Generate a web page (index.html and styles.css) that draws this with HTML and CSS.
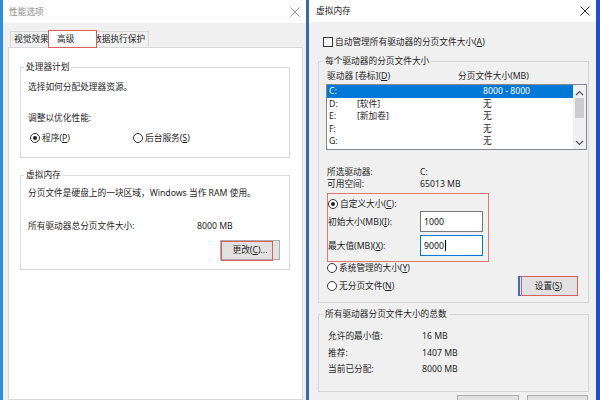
FILE: index.html
```html
<!DOCTYPE html>
<html lang="zh-CN">
<head>
<meta charset="utf-8">
<title>性能选项 / 虚拟内存</title>
<link rel="stylesheet" href="styles.css">
</head>
<body>
<div class="desktop">
  <div class="win win-left">
    <div class="titlebar inactive">
      <span class="title">性能选项</span>
      <svg class="close" width="10" height="10" viewBox="0 0 10 10"><path d="M0.5 0.5 L9.5 9.5 M9.5 0.5 L0.5 9.5" stroke="#9a9a9a" stroke-width="1" fill="none"/></svg>
    </div>
    <div class="lbody">
      <div class="tabs">
        <div class="tab tab1">视觉效果</div>
        <div class="tab tab-active">高级</div>
        <div class="tab tab3">数据执行保护</div>
      </div>
      <div class="panel">
        <fieldset class="group g-cpu">
          <legend>处理器计划</legend>
          <div class="line">选择如何分配处理器资源。</div>
          <div class="line opt-title">调整以优化性能:</div>
          <div class="radio-row">
            <label class="ritem r-prog"><span class="radio on"></span>程序(<u>P</u>)</label>
            <label class="ritem r-bg"><span class="radio"></span>后台服务(<u>S</u>)</label>
          </div>
        </fieldset>
        <fieldset class="group g-vm">
          <legend>虚拟内存</legend>
          <div class="line">分页文件是硬盘上的一块区域，Windows 当作 RAM 使用。</div>
          <div class="line total-row"><span class="total-label">所有驱动器总分页文件大小:</span><span>8000 MB</span></div>
          <div class="btn-row">
            <button class="btn btn-change">更改(<u>C</u>)...<span class="mark mark-change"></span></button>
          </div>
        </fieldset>
      </div>
    </div>
  </div>

  <div class="win win-right">
    <div class="titlebar">
      <span class="title">虚拟内存</span>
      <svg class="close" width="10" height="10" viewBox="0 0 10 10"><path d="M0.5 0.5 L9.5 9.5 M9.5 0.5 L0.5 9.5" stroke="#333" stroke-width="1" fill="none"/></svg>
    </div>
    <div class="rbody">
      <label class="check-row"><span class="checkbox"></span>自动管理所有驱动器的分页文件大小(<u>A</u>)</label>
      <fieldset class="group rgroup g-each">
        <legend>每个驱动器的分页文件大小</legend>
        <div class="list-head"><span class="hcol1">驱动器 [卷标](<u>D</u>)</span><span>分页文件大小(MB)</span></div>
        <div class="listbox">
          <div class="rows">
            <div class="row sel"><span class="c1">C:</span><span class="c2"></span><span>8000 - 8000</span></div>
            <div class="row"><span class="c1">D:</span><span class="c2">[软件]</span><span>无</span></div>
            <div class="row"><span class="c1">E:</span><span class="c2">[新加卷]</span><span>无</span></div>
            <div class="row"><span class="c1">F:</span><span class="c2"></span><span>无</span></div>
            <div class="row"><span class="c1">G:</span><span class="c2"></span><span>无</span></div>
          </div>
          <div class="scrollbar">
            <svg class="arrow" width="9" height="6" viewBox="0 0 9 6"><path d="M1 5 L4.5 1.5 L8 5" stroke="#555" stroke-width="1.2" fill="none"/></svg>
            <div class="thumb"></div>
            <div class="track"></div>
            <svg class="arrow" width="9" height="6" viewBox="0 0 9 6"><path d="M1 1 L4.5 4.5 L8 1" stroke="#555" stroke-width="1.2" fill="none"/></svg>
          </div>
        </div>
        <div class="info">
          <div class="kv"><span class="k">所选驱动器:</span><span>C:</span></div>
          <div class="kv"><span class="k">可用空间:</span><span>65013 MB</span></div>
        </div>
        <div class="custom-box">
          <label class="ritem"><span class="radio on"></span>自定义大小(<u>C</u>):</label>
          <div class="field-row first"><span class="fk">初始大小(MB)(<u>I</u>):</span><span class="input">1000</span></div>
          <div class="field-row"><span class="fk">最大值(MB)(<u>X</u>):</span><span class="input focus">9000<span class="caret"></span></span></div>
        </div>
        <label class="ritem sys-row"><span class="radio"></span>系统管理的大小(<u>Y</u>)</label>
        <div class="nopage-row">
          <label class="ritem"><span class="radio"></span>无分页文件(<u>N</u>)</label>
          <button class="btn btn-set">设置(<u>S</u>)<span class="mark mark-set"></span></button>
        </div>
      </fieldset>
      <fieldset class="group rgroup g-total">
        <legend>所有驱动器分页文件大小的总数</legend>
        <div class="trow"><span class="tk">允许的最小值:</span><span>16 MB</span></div>
        <div class="trow"><span class="tk">推荐:</span><span>1407 MB</span></div>
        <div class="trow"><span class="tk">当前已分配:</span><span>8000 MB</span></div>
      </fieldset>
      <div class="bottom-btns">
        <button class="btn btn-ok" aria-label="确定"></button>
        <button class="btn btn-cancel" aria-label="取消"></button>
      </div>
    </div>
  </div>
</div>
</body>
</html>
```

FILE: styles.css
```css
* { box-sizing: border-box; }
html, body { margin: 0; padding: 0; }
body {
  width: 600px;
  height: 400px;
  overflow: hidden;
  font-family: "Noto Sans", "Noto Sans CJK SC", sans-serif;
  font-size: 8.7px;
  color: #1e1e1e;
  background: #f0f0f0;
}
u { text-decoration: underline; text-underline-offset: 1px; }

.desktop { display: flex; width: 600px; height: 400px; }
.win { display: flex; flex-direction: column; height: 400px; background: #f0f0f0; overflow: hidden; }
.win-left { width: 306px; border-left: 3px solid #2b8de6; }
.win-right { width: 294px; border-left: 3px solid #3a68ad; border-right: 4px solid #1d4fcf; }

.titlebar {
  flex: none;
  height: 22px;
  background: #fff;
  display: flex;
  align-items: center;
  justify-content: space-between;
  padding: 0 6px 0 7px;
  line-height: 12px;
}
.win-left .titlebar { height: 23px; padding-left: 6px; }
.titlebar.inactive .title { color: #8c8c8c; }
.close { display: block; }

/* ---------- left window ---------- */
.lbody { flex: 1; display: flex; flex-direction: column; padding: 6px 3px 0 5px; min-height: 0; }
.tabs { display: flex; align-items: flex-end; height: 18px; padding-left: 2px; flex: none; }
.tab {
  height: 16px;
  line-height: 15px;
  border: 1px solid #d9d9d9;
  border-bottom: none;
  background: #f0f0f0;
  white-space: nowrap;
}
.tab1 { width: 40px; padding-left: 3px; overflow: hidden; }
.tab-active {
  position: relative;
  z-index: 2;
  height: 18px;
  width: 49px;
  margin-left: -2px;
  padding-left: 8px;
  line-height: 16px;
  background: #fff;
  border: 1px solid #d9605e;
  margin-bottom: -1px;
}
.tab3 { margin-left: -7px; padding: 0 3px 0 2px; }
.panel {
  flex: 1;
  background: #fff;
  border: 1px solid #d9d9d9;
  padding: 13px 0 0 11px;
}

.group {
  margin: 0;
  border: 1px solid #dcdcdc;
  padding: 0 8px 0 7px;
  min-width: 0;
}
.group legend { padding: 0 2px; margin-left: -4px; line-height: 12px; }
.line { line-height: 12px; height: 12px; white-space: nowrap; }

.g-cpu { width: 270px; padding-top: 8px; padding-bottom: 13px; }
.opt-title { margin-top: 19px; }
.radio-row { display: flex; margin-top: 8px; height: 12px; }
.ritem { display: flex; align-items: center; height: 12px; line-height: 12px; white-space: nowrap; }
.r-prog { margin-left: 2px; width: 103px; }
.radio {
  width: 10px; height: 10px;
  border: 1px solid #333;
  border-radius: 50%;
  background: #fff;
  display: inline-flex;
  align-items: center;
  justify-content: center;
  margin-right: 2px;
  flex: none;
}
.radio.on::after { content: ""; width: 4px; height: 4px; border-radius: 50%; background: #222; }

.g-vm { width: 270px; margin-top: 11px; padding-top: 6px; padding-bottom: 9px; }
.total-row { margin-top: 21px; display: flex; }
.total-label { width: 169px; }
.btn-row { display: flex; justify-content: flex-end; margin-top: 8px; padding-right: 1px; }

.btn {
  position: relative;
  font: inherit;
  color: #1e1e1e;
  height: 20px;
  width: 60px;
  padding: 0;
  border: 1px solid #adadad;
  background: #e1e1e1;
  display: flex;
  align-items: center;
  justify-content: center;
  line-height: 12px;
}
.mark { position: absolute; border: 1px solid #d9605e; pointer-events: none; }
.mark-change { left: 0; top: 0; width: 52px; height: 20px; }

/* ---------- right window ---------- */
.rbody { flex: 1; display: flex; flex-direction: column; padding: 14px 7px 0 9px; min-height: 0; }
.check-row { display: flex; align-items: center; height: 11px; line-height: 12px; margin-left: 5px; white-space: nowrap; flex: none; }
.checkbox { width: 10px; height: 10px; border: 1px solid #333; background: #fff; margin-right: 2px; flex: none; }

.rgroup { width: 271px; padding: 0 1px 0 8px; border-color: #d6d6d6; flex: none; }
.g-each { margin-top: 8px; padding-top: 3px; padding-bottom: 6px; }
.list-head { display: flex; height: 12px; line-height: 12px; white-space: nowrap; }
.hcol1 { width: 131px; }

.listbox {
  margin-top: 2px;
  margin-left: -1px;
  width: 261px;
  height: 66px;
  border: 1px solid #828790;
  background: #fff;
  display: flex;
}
.rows { flex: 1; }
.row { display: flex; height: 12.5px; line-height: 12.5px; padding-left: 2px; white-space: nowrap; }
.row.sel { background: #0078d7; color: #fff; }
.c1 { width: 28px; }
.c2 { width: 126px; }
.scrollbar {
  width: 13px;
  background: #f0f0f0;
  display: flex;
  flex-direction: column;
  align-items: center;
  padding: 5px 0 3px;
}
.arrow { display: block; flex: none; }
.thumb { width: 9px; height: 20px; background: #cdcdcd; margin-top: 2px; flex: none; }
.track { flex: 1; }

.info { margin-top: 16px; }
.kv { display: flex; height: 12px; line-height: 12px; white-space: nowrap; }
.k { width: 93px; }

.custom-box {
  margin-top: 3px;
  width: 162px;
  border: 1px solid #e07878;
  padding: 4px 0 5px 0;
}
.field-row { display: flex; align-items: center; height: 21px; margin-top: 3px; white-space: nowrap; }
.field-row.first { margin-top: 1px; }
.fk { width: 92px; }
.input {
  width: 63px;
  height: 21px;
  border: 1px solid #7a7a7a;
  background: #fff;
  padding-left: 3px;
  display: flex;
  align-items: center;
  color: #111;
}
.input.focus { border-color: #0078d7; }
.caret { display: inline-block; width: 1px; height: 11px; background: #000; margin-left: 1px; }

.sys-row { margin-top: 0; }
.nopage-row { display: flex; align-items: center; justify-content: space-between; margin-top: 2px; height: 20px; padding-right: 9px; }
.btn-set { border: 1px solid #2f74c8; border-left-width: 2px; }
.mark-set { left: 1px; top: -1px; right: -1px; bottom: -1px; }

.g-total { margin-top: 5px; padding-top: 8px; padding-bottom: 13px; }
.trow { display: flex; height: 16.5px; line-height: 16.5px; padding-left: 1px; white-space: nowrap; }
.tk { width: 94px; }

.bottom-btns { display: flex; justify-content: flex-end; gap: 8px; margin-top: 3px; padding-right: 1px; flex: none; }
.btn-ok { width: 62px; }
.btn-cancel { width: 61px; }
```
